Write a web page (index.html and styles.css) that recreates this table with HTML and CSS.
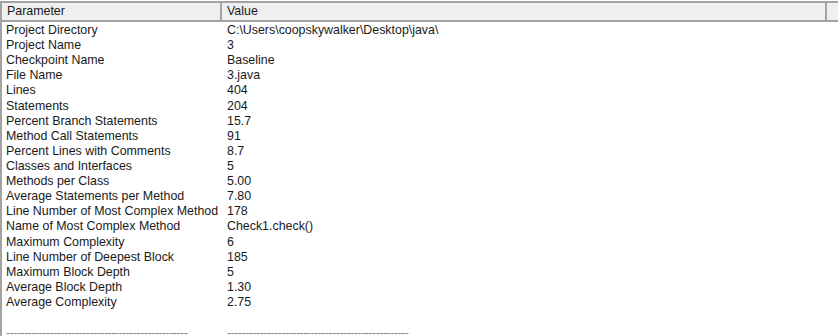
FILE: index.html
```html
<!DOCTYPE html>
<html>
<head>
<meta charset="utf-8">
<link rel="stylesheet" href="styles.css">
</head>
<body>
<div class="table">
  <div class="head">
    <div class="hcell param">Parameter</div>
    <div class="hcell value">Value</div>
    <div class="hcell rest"></div>
  </div>
  <div class="rows">
    <div class="row"><span class="p">Project Directory</span><span class="v">C:\Users\coopskywalker\Desktop\java\</span></div>
    <div class="row"><span class="p">Project Name</span><span class="v">3</span></div>
    <div class="row"><span class="p">Checkpoint Name</span><span class="v">Baseline</span></div>
    <div class="row"><span class="p">File Name</span><span class="v">3.java</span></div>
    <div class="row"><span class="p">Lines</span><span class="v">404</span></div>
    <div class="row"><span class="p">Statements</span><span class="v">204</span></div>
    <div class="row"><span class="p">Percent Branch Statements</span><span class="v">15.7</span></div>
    <div class="row"><span class="p">Method Call Statements</span><span class="v">91</span></div>
    <div class="row"><span class="p">Percent Lines with Comments</span><span class="v">8.7</span></div>
    <div class="row"><span class="p">Classes and Interfaces</span><span class="v">5</span></div>
    <div class="row"><span class="p">Methods per Class</span><span class="v">5.00</span></div>
    <div class="row"><span class="p">Average Statements per Method</span><span class="v">7.80</span></div>
    <div class="row"><span class="p">Line Number of Most Complex Method</span><span class="v">178</span></div>
    <div class="row"><span class="p">Name of Most Complex Method</span><span class="v">Check1.check()</span></div>
    <div class="row"><span class="p">Maximum Complexity</span><span class="v">6</span></div>
    <div class="row"><span class="p">Line Number of Deepest Block</span><span class="v">185</span></div>
    <div class="row"><span class="p">Maximum Block Depth</span><span class="v">5</span></div>
    <div class="row"><span class="p">Average Block Depth</span><span class="v">1.30</span></div>
    <div class="row"><span class="p">Average Complexity</span><span class="v">2.75</span></div>
    <div class="row"><span class="p">&nbsp;</span><span class="v"></span></div>
    <div class="row dash"><span class="p">--------------------------------------------------</span><span class="v">--------------------------------------------------</span></div>
  </div>
</div>
</body>
</html>
```
FILE: styles.css
```css
html, body {
  margin: 0;
  padding: 0;
  background: #ffffff;
}
body {
  width: 838px;
  height: 336px;
  overflow: hidden;
  font-family: "Liberation Sans", Arial, sans-serif;
  font-size: 12.4px;
  color: #1a1a1a;
}
.table {
  border-left: 2px solid #a3a3a3;
  margin-top: 1px;
  height: 335px;
}
.head {
  display: flex;
  height: 17px;
  background: #efefef;
  border-top: 2px solid #a3a3a3;
  border-bottom: 2px solid #a3a3a3;
}
.hcell {
  line-height: 17px;
  padding-left: 5px;
  box-sizing: border-box;
  border-right: 2px solid #a3a3a3;
}
.hcell.param { width: 220px; }
.hcell.value { width: 605px; }
.hcell.rest { flex: 1; border-right: none; }
.rows {
  padding-top: 1px;
}
.row {
  display: flex;
  height: 15.12px;
  line-height: 15px;
  white-space: nowrap;
}
.p {
  width: 220px;
  padding-left: 4px;
  box-sizing: border-box;
}
.v {
  padding-left: 5px;
}
.dash {
  color: #8a8a8a;
  letter-spacing: -0.5px;
  padding-top: 1px;
}
```
